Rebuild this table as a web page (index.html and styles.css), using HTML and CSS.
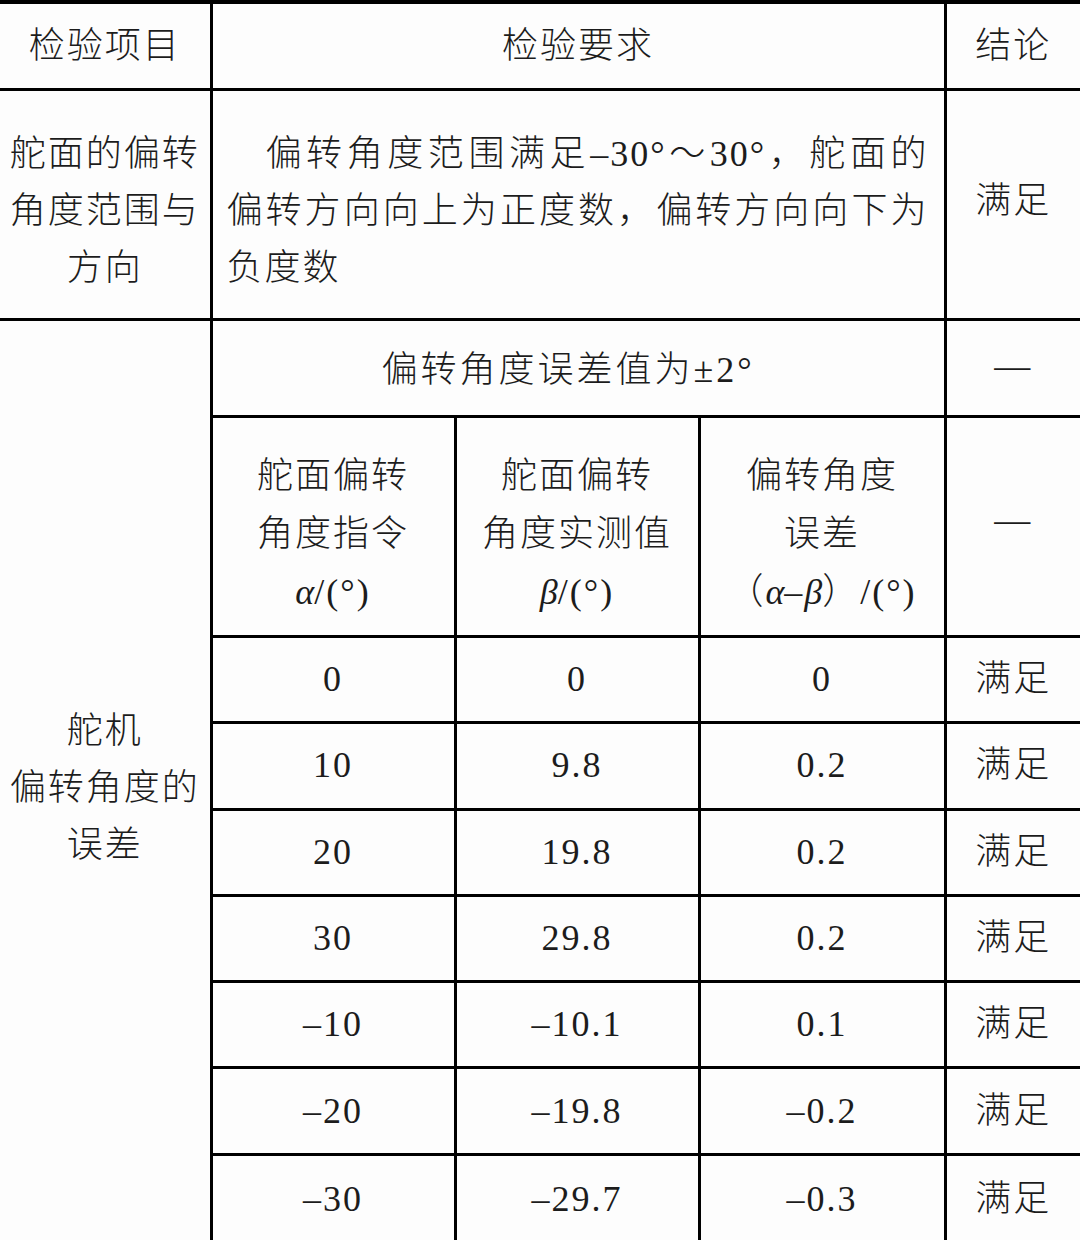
FILE: index.html
```html
<!DOCTYPE html>
<html lang="zh-CN">
<head>
<meta charset="utf-8">
<title>舵机检验</title>
<link rel="stylesheet" href="styles.css">
</head>
<body>
<table class="spec">
  <colgroup>
    <col class="c1"><col class="c2"><col class="c3"><col class="c4"><col class="c5">
  </colgroup>
  <tr class="r-head">
    <td>检验项目</td>
    <td colspan="3">检验要求</td>
    <td>结论</td>
  </tr>
  <tr class="r-range">
    <td class="multi">舵面的偏转<br>角度范围与<br>方向</td>
    <td colspan="3" class="para">
      <div class="ln j first">偏转角度范围满足–30°～30°，舵面的</div>
      <div class="ln j">偏转方向向上为正度数，偏转方向向下为</div>
      <div class="ln">负度数</div>
    </td>
    <td class="multi">满足</td>
  </tr>
  <tr class="r-tol">
    <td rowspan="10" class="multi">舵机<br>偏转角度的<br>误差</td>
    <td colspan="3" class="tol">偏转角度误差值为±2°</td>
    <td class="tolc">—</td>
  </tr>
  <tr class="r-sub">
    <td class="multi">舵面偏转<br>角度指令<br><i>α</i>/(°)</td>
    <td class="multi">舵面偏转<br>角度实测值<br><i>β</i>/(°)</td>
    <td class="multi">偏转角度<br>误差<br>（<i>α</i>–<i>β</i>）/(°)</td>
    <td class="multi dash">—</td>
  </tr>
  <tr class="r-data"><td>0</td><td>0</td><td>0</td><td>满足</td></tr>
  <tr class="r-data"><td>10</td><td>9.8</td><td>0.2</td><td>满足</td></tr>
  <tr class="r-data"><td>20</td><td>19.8</td><td>0.2</td><td>满足</td></tr>
  <tr class="r-data"><td>30</td><td>29.8</td><td>0.2</td><td>满足</td></tr>
  <tr class="r-data"><td>–10</td><td>–10.1</td><td>0.1</td><td>满足</td></tr>
  <tr class="r-data"><td>–20</td><td>–19.8</td><td>–0.2</td><td>满足</td></tr>
  <tr class="r-data last"><td>–30</td><td>–29.7</td><td>–0.3</td><td>满足</td></tr>
</table>
</body>
</html>
```

FILE: styles.css
```css
html, body {
  margin: 0;
  padding: 0;
  background: #fdfdfd;
}
body {
  width: 1080px;
  height: 1240px;
  overflow: hidden;
}
.spec {
  table-layout: fixed;
  width: 1080px;
  border-collapse: collapse;
  font-family: "Liberation Serif", "Noto Sans CJK SC", serif;
  font-weight: 300;
  font-size: 36px;
  color: #1c1c1c;
  border-top: 4px solid #000;
}
.c1 { width: 211px; }
.c2 { width: 244px; }
.c3 { width: 244px; }
.c4 { width: 246px; }
.c5 { width: 135px; }
.spec td {
  border: 3px solid #000;
  padding: 0;
  text-align: center;
  vertical-align: middle;
  letter-spacing: 2px;
  line-height: 57px;
}
.spec tr td:first-child { border-left: none; }
.spec tr td:last-child { border-right: none; }
.spec tr.last td { border-bottom: none; }
.spec i { font-style: italic; letter-spacing: 0; }
.r-head td { height: 84px; }
.r-range td { height: 213px; }
.r-tol td { height: 90px; }
.r-sub td { height: 203px; }
.r-data td { height: 83.3px; }
.r-data.last td { height: 87px; }
.spec td.multi {
  line-height: 57px;
  padding-top: 14px;
}
.spec td.multi.dash { padding-top: 0; padding-bottom: 14px; }
.r-range td.multi:last-child { padding-top: 4px; padding-bottom: 10px; }
.r-sub td.multi { line-height: 58px; }
.spec td.para {
  text-align: left;
  padding: 14px 15px 0 14px;
}
.spec td.tol {
  letter-spacing: 3px;
  padding-right: 20px;
  padding-top: 4px;
}
.spec td.tolc { padding-bottom: 4px; }
.ln { text-align: left; }
.ln.j { text-align: justify; text-align-last: justify; }
.ln.first { padding-left: 39px; }
```
